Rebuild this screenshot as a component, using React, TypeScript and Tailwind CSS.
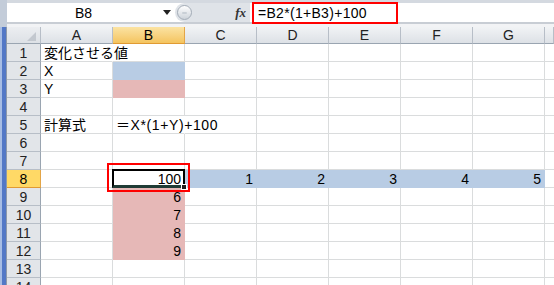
import React from "react";

type Fill = "blue" | "pink";

interface CellData {
  text?: string;
  fill?: Fill;
  right?: boolean;
  overflow?: boolean;
  wide?: boolean;
}

const COLS = ["A", "B", "C", "D", "E", "F", "G"];
const ROWS = [1, 2, 3, 4, 5, 6, 7, 8, 9, 10, 11, 12, 13, 14];

const cells: Record<string, CellData> = {
  A1: { text: "変化させる値", overflow: true },
  A2: { text: "X" },
  B2: { fill: "blue" },
  A3: { text: "Y" },
  B3: { fill: "pink" },
  A5: { text: "計算式" },
  B5: { text: "＝X*(1+Y)+100", overflow: true, wide: true },
  B8: { text: "100", right: true },
  C8: { text: "1", right: true, fill: "blue" },
  D8: { text: "2", right: true, fill: "blue" },
  E8: { text: "3", right: true, fill: "blue" },
  F8: { text: "4", right: true, fill: "blue" },
  G8: { text: "5", right: true, fill: "blue" },
  B9: { text: "6", right: true, fill: "pink" },
  B10: { text: "7", right: true, fill: "pink" },
  B11: { text: "8", right: true, fill: "pink" },
  B12: { text: "9", right: true, fill: "pink" },
};

const fillClass = (fill?: Fill) => {
  switch (fill) {
    case "blue":
      return "bg-[#b8cce4] border-[#b8cce4]";
    case "pink":
      return "bg-[#e6b8b7] border-[#e6b8b7]";
    default:
      return "border-[#dadcdd]";
  }
};

const font = { fontFamily: '"Liberation Sans", "Noto Sans CJK JP", sans-serif' };

function FormulaBar() {
  return (
    <div className="h-[27px] flex flex-none">
      <div className="w-[7px] bg-[#c3ccd9]" />
      <div className="flex-1 flex flex-col">
        <div className="h-[3px] bg-[#d4d9e0]" />
        <div className="h-[19px] flex bg-white">
          {/* Name box */}
          <div className="w-[168px] flex items-center">
            <div className="w-[153px] text-center text-[14px] leading-[16px] text-black">
              B8
            </div>
            <svg width="8" height="5" viewBox="0 0 8 5" className="ml-[3px]">
              <path d="M0 0 H8 L4 5 Z" fill="#222" />
            </svg>
          </div>
          {/* Separator with knob and fx */}
          <div className="w-[75px] flex items-center bg-[#dfe3e8] rounded-l-full pl-[2px]">
            <div className="w-[15px] h-[15px] rounded-full border border-[#a3acb7] bg-gradient-to-b from-[#ffffff] to-[#cdd3da] flex items-center justify-center">
              <div className="w-[5px] h-[2px] bg-[#c9cfd6] rounded-full" />
            </div>
            <span
              className="ml-auto mr-[4px] italic font-bold text-[13px] leading-[14px] text-[#333]"
              style={{ fontFamily: '"Liberation Serif", serif' }}
            >
              fx
            </span>
          </div>
          {/* Formula input */}
          <div className="flex-1 relative flex items-center pl-[8px] text-[14px] leading-[16px] tracking-[0.3px] text-black">
            =B2*(1+B3)+100
            <div className="absolute left-[2px] -top-[1px] w-[146px] h-[22px] border-2 border-[#ff0000]" />
          </div>
        </div>
        <div className="h-[2px] bg-[#c8cdd4]" />
        <div className="h-[3px] bg-[#f2f3f5]" />
      </div>
    </div>
  );
}

function ColumnHeader({ label, selected }: { label: string; selected?: boolean }) {
  return (
    <div
      className={`flex items-center justify-center text-[14px] leading-[15px] border-r border-b ${
        selected
          ? "bg-gradient-to-b from-[#fbe3a2] to-[#f4c45e] border-r-[#e3a547] border-b-[#e09a33] text-black"
          : "bg-gradient-to-b from-[#f1f3f5] to-[#dde1e6] border-r-[#b7bec7] border-b-[#9aa5b1] text-[#222]"
      }`}
    >
      {label}
    </div>
  );
}

function RowHeader({ n }: { n: number }) {
  const selected = n === 8;
  return (
    <div
      className={`flex items-center justify-center text-[14px] leading-[16px] border-r border-b ${
        selected
          ? "bg-[#ffd966] border-r-[#e3a547] border-b-[#e09a33] text-black"
          : "bg-[#e2e5e9] border-r-[#9aa5b1] border-b-[#b7bec7] text-[#222]"
      }`}
    >
      {n}
    </div>
  );
}

function SheetCell({ id }: { id: string }) {
  const cell = cells[id] ?? {};
  const selected = id === "B8";
  return (
    <div
      className={`relative flex items-center px-[3px] pt-[1px] border-r border-b whitespace-nowrap text-[14px] leading-[16px] text-black ${fillClass(
        cell.fill
      )} ${cell.right ? "justify-end" : "justify-start"} ${
        cell.overflow ? "z-10 border-r-transparent" : ""
      } ${cell.wide ? "tracking-[0.6px]" : ""} ${selected ? "z-20 bg-white" : ""}`}
    >
      {cell.text}
      {selected && (
        <>
          <div className="absolute -left-[1px] -top-[1px] -right-[1px] -bottom-[1px] border-2 border-b-[3px] border-black border-b-[#1f3b35]" />
          <div className="absolute -right-[3px] -bottom-[3px] w-[6px] h-[6px] bg-[#1e1e1e] border border-white" />
          <div className="absolute -left-[6px] -top-[7px] -right-[6px] -bottom-[5px] border-2 border-[#ff0000]" />
        </>
      )}
    </div>
  );
}

function Sheet() {
  return (
    <div className="flex-1 flex min-h-0">
      <div className="w-[7px] flex-none flex">
        <div className="w-[2px] bg-[#a7bde4]" />
        <div className="w-[4px] bg-[#5378c6]" />
        <div className="w-[1px] bg-[#8d99aa]" />
      </div>
      <div className="flex-1 grid grid-cols-[34px_repeat(7,72px)_1fr] grid-rows-[17px_repeat(14,18px)] bg-white overflow-hidden">
        <div className="relative bg-gradient-to-b from-[#eceef1] to-[#dde1e6] border-r border-b border-r-[#b7bec7] border-b-[#9aa5b1]">
          <svg width="9" height="9" viewBox="0 0 9 9" className="absolute right-[4px] bottom-[2px]">
            <path d="M9 0 V9 H0 Z" fill="#c3c8cf" />
          </svg>
        </div>
        {COLS.map((c) => (
          <ColumnHeader key={c} label={c} selected={c === "B"} />
        ))}
        <ColumnHeader label="" />
        {ROWS.map((r) => (
          <React.Fragment key={r}>
            <RowHeader n={r} />
            {COLS.map((c) => (
              <SheetCell key={c + r} id={c + r} />
            ))}
            <div className="border-b border-[#dadcdd]" />
          </React.Fragment>
        ))}
      </div>
    </div>
  );
}

export default function App() {
  return (
    <div className="w-[554px] h-[285px] overflow-hidden flex flex-col bg-white" style={font}>
      <FormulaBar />
      <Sheet />
    </div>
  );
}
